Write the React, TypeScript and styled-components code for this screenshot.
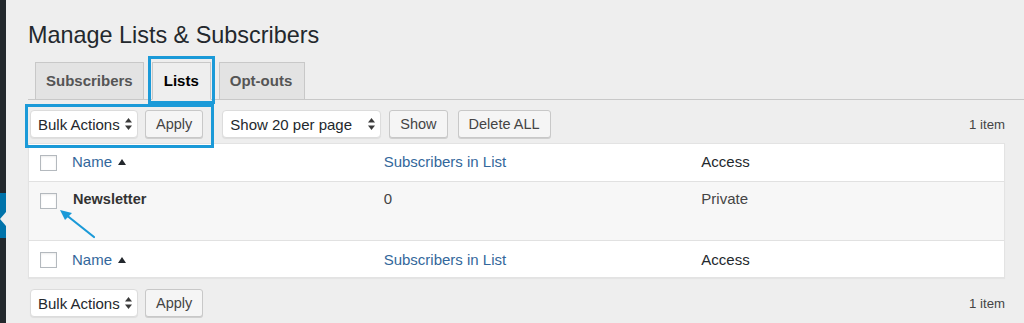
import styled, { createGlobalStyle } from 'styled-components';

const GlobalStyle = createGlobalStyle`
  html, body {
    margin: 0;
    padding: 0;
    background: #eeeeee;
    font-family: "Liberation Sans", Arial, Helvetica, sans-serif;
    color: #32373c;
  }
  * {
    box-sizing: border-box;
  }
`;

const blue = '#1b9ad8';

const lists = [{ name: 'Newsletter', subscribers: 0, access: 'Private' }];

const SortArrow = () => (
  <svg width="8" height="6" viewBox="0 0 8 6">
    <polygon points="4,0 8,6 0,6" fill="#23282d" />
  </svg>
);

const UpDown = () => (
  <svg width="7" height="12" viewBox="0 0 7 12">
    <polygon points="3.5,0 7,4.6 0,4.6" fill="#3a3a3a" />
    <polygon points="0,7.4 7,7.4 3.5,12" fill="#3a3a3a" />
  </svg>
);

const PointerArrow = () => (
  <svg width="40" height="32" viewBox="0 0 40 32">
    <line x1="7" y1="6" x2="36" y2="29" stroke={blue} strokeWidth="2.2" strokeLinecap="round" />
    <polygon points="2,2 14,5 7,12" fill={blue} />
  </svg>
);

const Check = () => <CheckBox />;

const HeaderCells = ({ foot }: { foot?: boolean }) => (
  <>
    <CheckCell>
      <Check />
    </CheckCell>
    <Cell $foot={foot}>
      <SortLink>
        Name <SortArrow />
      </SortLink>
    </Cell>
    <Cell $foot={foot} $shift={-2}>
      <SortLink>Subscribers in List</SortLink>
    </Cell>
    <Cell $foot={foot} $shift={2}>
      Access
    </Cell>
  </>
);

const App = () => {
  return (
    <>
      <GlobalStyle />
      <Page>
        <AdminMenu>
          <CurrentItem />
        </AdminMenu>
        <Wrap>
          <Title>Manage Lists &amp; Subscribers</Title>
          <TabBar>
            <Tab>Subscribers</Tab>
            <Tab $active $highlight>
              Lists
            </Tab>
            <Tab>Opt-outs</Tab>
          </TabBar>

          <TableNav $top>
            <Group $highlight>
              <Select $width={108}>
                Bulk Actions <UpDown />
              </Select>
              <Button>Apply</Button>
            </Group>
            <Group $gap={8} style={{ marginLeft: 19 }}>
              <Select $width={159}>
                Show 20 per page <UpDown />
              </Select>
              <Button>Show</Button>
              <Button style={{ marginLeft: 2 }}>Delete ALL</Button>
            </Group>
            <Count>1 item</Count>
          </TableNav>

          <Table>
            <HeadRow>
              <HeaderCells />
            </HeadRow>
            {lists.map((l) => (
              <BodyRow key={l.name}>
                <CheckCell>
                  <Check />
                  <ArrowWrap>
                    <PointerArrow />
                  </ArrowWrap>
                </CheckCell>
                <Cell $body>
                  <RowTitle>{l.name}</RowTitle>
                </Cell>
                <Cell $body $muted $shift={-2}>
                  {l.subscribers}
                </Cell>
                <Cell $body $muted $shift={2}>
                  {l.access}
                </Cell>
              </BodyRow>
            ))}
            <FootRow>
              <HeaderCells foot />
            </FootRow>
          </Table>

          <TableNav>
            <Group>
              <Select $width={108}>
                Bulk Actions <UpDown />
              </Select>
              <Button>Apply</Button>
            </Group>
            <Count>1 item</Count>
          </TableNav>
        </Wrap>
      </Page>
    </>
  );
};

export default App;

const Page = styled.div`
  display: flex;
  min-height: 100vh;
  overflow: hidden;
`;

const AdminMenu = styled.div`
  flex: 0 0 6px;
  background: #23282d;
  padding-top: 193px;
`;

const CurrentItem = styled.div`
  position: relative;
  height: 45px;
  background: #0073aa;

  &::after {
    content: '';
    position: absolute;
    right: 0;
    top: 19px;
    border-style: solid;
    border-width: 7px 6px 7px 0;
    border-color: transparent #eeeeee transparent transparent;
  }
`;

const Wrap = styled.div`
  flex: 1;
  padding: 20px 19px 0 22px;
`;

const Title = styled.h1`
  margin: 0;
  font-size: 23.4px;
  line-height: 30px;
  font-weight: 400;
  color: #23282d;
`;

const TabBar = styled.div`
  display: flex;
  align-items: flex-end;
  margin-top: 12px;
  margin-right: -19px;
  border-bottom: 1px solid #c8c8c8;
`;

const Tab = styled.div<{ $active?: boolean; $highlight?: boolean }>`
  position: relative;
  margin-left: 7px;
  padding: 6px ${(p) => (p.$active ? '11px' : '10px')};
  font-size: 15px;
  line-height: 24px;
  font-weight: 700;
  color: ${(p) => (p.$active ? '#000' : '#555')};
  background: ${(p) => (p.$active ? '#eeeeee' : '#e3e3e3')};
  border: 1px solid #c8c8c8;
  border-bottom: ${(p) => (p.$active ? '1px solid #eeeeee' : 'none')};
  margin-bottom: ${(p) => (p.$active ? '-1px' : '0')};

  & + & {
    margin-left: 8px;
  }

  &:last-child {
    padding-right: 12px;
  }

  ${(p) =>
    p.$highlight &&
    `
    &::after {
      content: '';
      position: absolute;
      left: -5px;
      right: -5px;
      top: -7px;
      bottom: -5px;
      border: 3px solid ${blue};
    }
  `}
`;

const TableNav = styled.div<{ $top?: boolean }>`
  display: flex;
  align-items: center;
  padding: ${(p) => (p.$top ? '10px 0 5px 2px' : '11px 0 8px 2px')};
`;

const Group = styled.div<{ $highlight?: boolean; $gap?: number }>`
  position: relative;
  display: flex;
  align-items: center;
  gap: ${(p) => p.$gap ?? 7}px;

  ${(p) =>
    p.$highlight &&
    `
    &::after {
      content: '';
      position: absolute;
      left: -5px;
      right: -11px;
      top: -6px;
      bottom: -10px;
      border: 3px solid ${blue};
    }
  `}
`;

const Select = styled.div<{ $width: number }>`
  display: flex;
  align-items: center;
  justify-content: space-between;
  width: ${(p) => p.$width}px;
  height: 28px;
  padding: 0 5px 0 7px;
  background: #fff;
  border: 1px solid #dcdcdc;
  border-radius: 4px;
  box-shadow: 0 1px 1px rgba(0, 0, 0, 0.07);
  font-size: 15px;
  color: #23282d;
  white-space: nowrap;
`;

const Button = styled.div`
  display: flex;
  align-items: center;
  height: 28px;
  padding: 0 10px;
  background: #f5f5f5;
  border: 1px solid #c8c8c8;
  border-radius: 3px;
  box-shadow: 0 1px 0 #cfcfcf;
  font-size: 14.5px;
  color: #444;
  white-space: nowrap;
`;

const Count = styled.div`
  margin-left: auto;
  font-size: 13.2px;
  color: #444;
`;

const Table = styled.div`
  background: #fff;
  border: 1px solid #e3e3e3;
  box-shadow: 0 1px 1px rgba(0, 0, 0, 0.04);
`;

const Row = styled.div`
  display: grid;
  grid-template-columns: 34px repeat(3, 1fr);
`;

const HeadRow = styled(Row)`
  border-bottom: 1px solid #e1e1e1;
`;

const BodyRow = styled(Row)`
  background: #f7f7f7;
  height: 58px;
`;

const FootRow = styled(Row)`
  border-top: 1px solid #e1e1e1;
`;

const Cell = styled.div<{ $muted?: boolean; $body?: boolean; $foot?: boolean; $shift?: number }>`
  padding: ${(p) => (p.$body ? '6px' : p.$foot ? '8px' : '7px')} 10px
    ${(p) => (p.$foot ? '7px' : '9px')} ${(p) => 9 + (p.$shift ?? 0)}px;
  font-size: 15px;
  line-height: 21px;
  color: ${(p) => (p.$muted ? '#444' : '#23282d')};
`;

const CheckCell = styled.div`
  position: relative;
  padding: 11px 0 0 11px;
`;

const CheckBox = styled.div`
  width: 17px;
  height: 16px;
  background: #fff;
  border: 1px solid #b4b9be;
  box-shadow: inset 0 1px 2px rgba(0, 0, 0, 0.08);
`;

const ArrowWrap = styled.div`
  position: absolute;
  left: 29px;
  top: 26px;
  line-height: 0;
`;

const SortLink = styled.span`
  display: inline-flex;
  align-items: center;
  gap: 6px;
  color: #33679b;
`;

const RowTitle = styled.span`
  font-weight: 700;
  font-size: 14.5px;
  color: #333;
  padding-left: 1px;
`;
